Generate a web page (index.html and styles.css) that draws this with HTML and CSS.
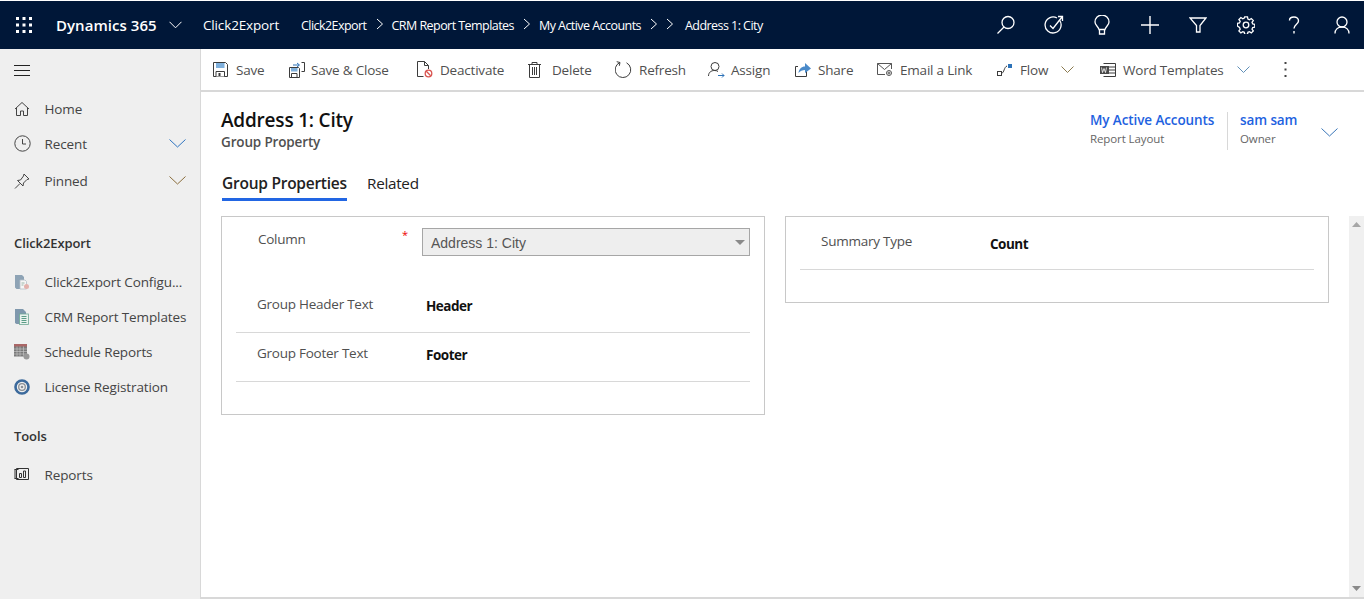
FILE: index.html
```html
<!DOCTYPE html>
<html lang="en">
<head>
<meta charset="utf-8">
<title>Address 1: City</title>
<link rel="stylesheet" href="styles.css">
</head>
<body>
<div class="app">
  <header class="topbar">
    <svg class="waffle" width="16" height="16" viewBox="0 0 16 16"><g fill="#fff"><rect x="0" y="0" width="3" height="3"/><rect x="6.500" y="0" width="3" height="3"/><rect x="13" y="0" width="3" height="3"/><rect x="0" y="6.500" width="3" height="3"/><rect x="6.500" y="6.500" width="3" height="3"/><rect x="13" y="6.500" width="3" height="3"/><rect x="0" y="13" width="3" height="3"/><rect x="6.500" y="13" width="3" height="3"/><rect x="13" y="13" width="3" height="3"/></g></svg>
    <span class="brand">Dynamics 365</span>
    <svg class="brand-chev" width="13" height="8" viewBox="0 0 13 8"><path d="M.5.8 6.500 6.800 12.500.8" fill="none" stroke="#fff"/></svg>
    <span class="app-name">Click2Export</span>
    <nav class="crumbs">
      <span class="crumb">Click2Export</span>
      <svg class="sep" width="8" height="12" viewBox="0 0 8 12"><path d="M1 1l5.500 5L1 11" fill="none" stroke="#fff"/></svg>
      <span class="crumb">CRM Report Templates</span>
      <svg class="sep" width="8" height="12" viewBox="0 0 8 12"><path d="M1 1l5.500 5L1 11" fill="none" stroke="#fff"/></svg>
      <span class="crumb">My Active Accounts</span>
      <svg class="sep" width="8" height="12" viewBox="0 0 8 12"><path d="M1 1l5.500 5L1 11" fill="none" stroke="#fff"/></svg>
      <svg class="sep tight" width="8" height="12" viewBox="0 0 8 12"><path d="M1 1l5.500 5L1 11" fill="none" stroke="#fff"/></svg>
      <span class="crumb">Address 1: City</span>
    </nav>
    <div class="top-icons">
      <span class="top-icon"><svg width="20" height="20" viewBox="0 0 20 20" fill="none" stroke="#fff" stroke-width="1.300"><circle cx="12" cy="7.500" r="6"/><path d="M8 12 1.500 18.500"/></svg></span>
      <span class="top-icon"><svg width="20" height="20" viewBox="0 0 20 20" fill="none" stroke="#fff" stroke-width="1.300"><path d="M15.500 5.200A8 8 0 1 1 13 3"/><path d="M6 10.500l3 3 9-11.500M14 1.500h4.500V6"/></svg></span>
      <span class="top-icon"><svg width="18" height="20" viewBox="0 0 18 20" fill="none" stroke="#fff" stroke-width="1.300"><path d="M6 14.500C5.500 11.500 2 10.500 2 7a7 7 0 0 1 14 0c0 3.500-3.500 4.500-4 7.500z"/><path d="M6.500 14.500V19h5v-4.500"/></svg></span>
      <span class="top-icon"><svg width="18" height="18" viewBox="0 0 18 18" stroke="#fff" stroke-width="1.400"><path d="M0 9h18M9 0v18"/></svg></span>
      <span class="top-icon"><svg width="18" height="18" viewBox="0 0 18 18" fill="none" stroke="#fff" stroke-width="1.300"><path d="M1 2h16l-6 7.500V16H7.500V9.500z"/></svg></span>
      <span class="top-icon"><svg width="18" height="18" viewBox="0 0 18 18" fill="none" stroke="#fff" stroke-width="1.300"><circle cx="9" cy="9" r="2.800"/><path d="M7.600 1h2.800l.4 2.200 1.500.6 1.900-1.200 2 2-1.300 1.800.7 1.600 2.100.4v2.800l-2.100.4-.7 1.600 1.300 1.800-2 2-1.900-1.200-1.500.6-.4 2.200H7.600l-.4-2.200-1.500-.6-1.900 1.200-2-2 1.300-1.800-.7-1.600L.3 10.200V7.400l2.100-.4.7-1.600-1.300-1.800 2-2 1.900 1.200 1.500-.6z" transform="translate(.1 -.1)"/></svg></span>
      <span class="top-icon"><svg width="12" height="18" viewBox="0 0 12 18" fill="none" stroke="#fff" stroke-width="1.400"><path d="M1.500 4.500C1.500 2.300 3.500 1 6 1s4.500 1.500 4.500 4C10.500 8 6 8.500 6 12.500"/><path d="M6 15v2.500"/></svg></span>
      <span class="top-icon"><svg width="16" height="18" viewBox="0 0 16 18" fill="none" stroke="#fff" stroke-width="1.300"><circle cx="8" cy="6" r="5"/><path d="M1 17.500C1 13.500 4 11 8 11s7 2.500 7 6.500"/></svg></span>
    </div>
  </header>

  <aside class="sidebar">
    <button class="hamburger" type="button" aria-label="Menu"><span></span><span></span><span></span></button>
    <ul class="side-list first">
      <li class="side-item"><svg width="16" height="16" viewBox="0 0 16 16" fill="none" stroke="#444"><path d="M1 8 8 1.500 15 8M2.500 7v7.500h4V10h3v4.500h4V7"/></svg><span>Home</span></li>
      <li class="side-item"><svg width="17" height="17" viewBox="0 0 17 17" fill="none" stroke="#444"><circle cx="8.500" cy="8.500" r="7.700"/><path d="M8.500 4v5H12"/></svg><span>Recent</span><svg class="side-chev" width="17" height="9" viewBox="0 0 17 9"><path d="M.5.500l8 7.500 8-7.500" fill="none" stroke="#2f74c0"/></svg></li>
      <li class="side-item pinned"><svg width="16" height="16" viewBox="0 0 16 16" fill="none" stroke="#444"><path d="M10 1l5 5-2 .5-3.500 3.500-.5 3L3.500 7.500l3-.5L9.500 3zM6 10.500l-5 5"/></svg><span>Pinned</span><svg class="side-chev" width="17" height="9" viewBox="0 0 17 9"><path d="M.5.500l8 7.500 8-7.500" fill="none" stroke="#8a6d3b"/></svg></li>
    </ul>
    <h2 class="side-head">Click2Export</h2>
    <ul class="side-list">
      <li class="side-item"><svg width="16" height="16" viewBox="0 0 16 16"><path d="M1 1h7l2 2v3H6v9H2.500L1 13.500z" fill="#8ea3b5"/><path d="M6 6h5l1.500 1.500V15H6z" fill="#f6f6f6" stroke="#b5bfc7" stroke-width=".8"/><path d="M7.500 9h3M7.500 11h2" stroke="#9db5a9"/><circle cx="12.500" cy="12.500" r="2.500" fill="#e3b1ac"/></svg><span>Click2Export Configu...</span></li>
      <li class="side-item"><svg width="16" height="16" viewBox="0 0 16 16"><path d="M1 0h8l3 3v2H6v10H2.500L1 14z" fill="#7f98ad"/><rect x="5.500" y="5" width="9" height="10.500" fill="#e9f2ee" stroke="#6fa894" stroke-width=".8"/><path d="M7.500 7.500h5M7.500 9.500h5M7.500 11.500h5M7.500 13.500h5" stroke="#5b9c86"/></svg><span>CRM Report Templates</span></li>
      <li class="side-item"><svg width="16" height="16" viewBox="0 0 16 16"><rect x="0" y="0" width="13" height="12.500" fill="#7a7a7a"/><rect x="0" y="0" width="13" height="2.500" fill="#a66"/><path d="M0 5h13M0 7.500h13M0 10h13M3 2.500v10M6 2.500v10M9.500 2.500v10" stroke="#ccc" stroke-width=".6"/><circle cx="12.500" cy="12.500" r="3" fill="#999"/></svg><span>Schedule Reports</span></li>
      <li class="side-item"><svg width="16" height="16" viewBox="0 0 16 16" fill="none"><circle cx="8" cy="8" r="6.500" stroke="#3c6a9c" stroke-width="2.600"/><circle cx="8" cy="8" r="3.300" stroke="#8a8f95" stroke-width="1.300"/><circle cx="8" cy="8" r="1.300" fill="#8a8f95"/></svg><span>License Registration</span></li>
    </ul>
    <h2 class="side-head tools">Tools</h2>
    <ul class="side-list">
      <li class="side-item"><svg width="15" height="15" viewBox="0 0 15 15" fill="none" stroke="#333"><path d="M2.500 1.500h12v11h-12zM.5 2.500h4M.5 11.500h4M1 2.500v9"/><path d="M5.500 6.500h2v4h-2zM9.500 4h2v6.500h-2z"/></svg><span>Reports</span></li>
    </ul>
  </aside>

  <main class="main">
    <div class="cmdbar">
      <span class="cmd"><svg width="15" height="15" viewBox="0 0 15 15"><path d="M.5.500h12l2 2v12H.5z" fill="#fff" stroke="#3c3c3c"/><rect x="3" y="1" width="8.500" height="5" fill="#7fb0dc"/><path d="M3 14.500V9.500h8.500v5" fill="#fff" stroke="#3c3c3c"/><rect x="5.500" y="11" width="2" height="3" fill="#3c3c3c"/></svg><span>Save</span></span>
      <span class="cmd narrow"><svg width="16" height="16" viewBox="0 0 16 16"><path d="M.5 5.500h9l1 1v9H.5z" fill="#fff" stroke="#3c3c3c"/><rect x="2" y="6" width="6.500" height="3.500" fill="#7fb0dc"/><path d="M2.500 15v-3.500h5.500V15" fill="none" stroke="#3c3c3c"/><path d="M4 3h6M8 1l2.500 2L8 5" fill="none" stroke="#2c72b8"/><path d="M12.500.5h3v9h-3" fill="none" stroke="#3c3c3c"/></svg><span>Save &amp; Close</span></span>
      <span class="cmd"><svg width="16" height="17" viewBox="0 0 16 17"><path d="M.5 12V.5h7l4 4V8M.5 15.500h6M7.500.5v4h4" fill="none" stroke="#3c3c3c"/><path d="M.5 12v3.500" stroke="#3c3c3c"/><circle cx="11.500" cy="12.500" r="3.300" fill="#fff" stroke="#d9534f" stroke-width="1.300"/><path d="M9.300 10.300l4.400 4.400" stroke="#d9534f" stroke-width="1.300"/></svg><span>Deactivate</span></span>
      <span class="cmd wide"><svg width="13" height="16" viewBox="0 0 13 16" fill="none" stroke="#3c3c3c"><path d="M0 2.500h13M4 2.500V.5h5v2M1.500 2.500v13h10v-13M4.500 5v8M6.500 5v8M8.500 5v8"/></svg><span>Delete</span></span>
      <span class="cmd wide"><svg width="17" height="17" viewBox="0 0 17 17" fill="none" stroke="#3c3c3c"><path d="M11.500 1.800A7.800 7.800 0 1 1 4.800 1.600"/><path d="M1.700.7 5 1.500l-.7 3.300" /></svg><span>Refresh</span></span>
      <span class="cmd"><svg width="17" height="16" viewBox="0 0 17 16" fill="none" stroke="#3c3c3c"><circle cx="7" cy="4.500" r="4"/><path d="M.5 14c0-3.500 2.500-5.500 6-5.500 1.500 0 2.500.3 3.500 1"/><path d="M10 13.500h6M14 11.500l2 2-2 2" stroke="#2c72b8"/></svg><span>Assign</span></span>
      <span class="cmd"><svg width="16" height="15" viewBox="0 0 16 15"><path d="M3 4.500H.5v10h11V9" fill="none" stroke="#3c3c3c"/><path d="M3.500 11C4 7 6.500 4.500 10 4.500V1l6 5.500L10 11V8C7.500 8 5 9 3.500 11z" fill="#4a8ac9"/></svg><span>Share</span></span>
      <span class="cmd"><svg width="16" height="15" viewBox="0 0 16 15" fill="none" stroke="#555"><path d="M8 12.500H.5v-11h14V7"/><path d="M.5 1.500l7 6 7-6"/><circle cx="12" cy="11" r="2.500"/><circle cx="12" cy="11" r="1"/></svg><span>Email a Link</span></span>
      <span class="cmd"><svg width="16" height="14" viewBox="0 0 16 14"><rect x=".5" y="8.500" width="4" height="4" fill="#fff" stroke="#3c3c3c"/><path d="M5 10c2 0 2-6 5-7" fill="none" stroke="#3c3c3c"/><rect x="11" y="1" width="4" height="4" fill="#2c72b8"/></svg><span>Flow</span><svg class="cmd-chev" width="13" height="7" viewBox="0 0 13 7"><path d="M.5.500l6 6 6-6" fill="none" stroke="#8a7a4f"/></svg></span>
      <span class="cmd"><svg width="16" height="14" viewBox="0 0 16 14"><path d="M3.500.5h12v13h-12" fill="#fff" stroke="#3c3c3c"/><path d="M9 4h6M9 7h6M9 10h6" stroke="#3c3c3c"/><rect x="0" y="3" width="9" height="8" fill="#4a4a4a"/><path d="M1.500 4.500l1 5 1.500-4 1.500 4 1-5" fill="none" stroke="#fff" stroke-width=".8"/></svg><span>Word Templates</span><svg class="cmd-chev" width="13" height="7" viewBox="0 0 13 7"><path d="M.5.500l6 6 6-6" fill="none" stroke="#5f8fb8"/></svg></span>
      <span class="cmd"><svg width="3" height="15" viewBox="0 0 3 15" fill="#444"><rect x=".5" width="2" height="2"/><rect x=".5" y="6.500" width="2" height="2"/><rect x=".5" y="13" width="2" height="2"/></svg></span>
    </div>

    <div class="rec-head">
      <div class="rec-title">
        <h1>Address 1: City</h1>
        <p>Group Property</p>
      </div>
      <div class="rec-meta">
        <div class="meta first-meta"><a>My Active Accounts</a><span>Report Layout</span></div>
        <div class="meta owner"><a>sam sam</a><span>Owner</span></div>
        <svg class="meta-chev" width="17" height="9" viewBox="0 0 17 9"><path d="M.5.500l8 7.500 8-7.500" fill="none" stroke="#3a76b8"/></svg>
      </div>
    </div>

    <div class="tabs">
      <span class="tab active">Group Properties</span>
      <span class="tab">Related</span>
    </div>

    <div class="content">
      <div class="panels">
        <section class="panel left">
          <div class="row column-row">
            <span class="lbl">Column</span>
            <span class="req">*</span>
            <div class="select">Address 1: City<svg width="10" height="5" viewBox="0 0 10 5"><path d="M0 0h10L5 5z" fill="#8a8a8a"/></svg></div>
          </div>
          <div class="row text-row"><span class="lbl">Group Header Text</span><b>Header</b></div>
          <div class="row text-row"><span class="lbl">Group Footer Text</span><b>Footer</b></div>
        </section>
        <section class="panel right">
          <div class="row summary-row"><span class="lbl">Summary Type</span><b>Count</b></div>
        </section>
      </div>
      <div class="scrollbar">
        <svg width="9" height="5" viewBox="0 0 9 5"><path d="M0 5h9L4.500 0z" fill="#a6a6a6"/></svg>
        <svg width="9" height="5" viewBox="0 0 9 5"><path d="M0 0h9L4.500 5z" fill="#8a8a8a"/></svg>
      </div>
    </div>
  </main>
</div>
</body>
</html>
```

FILE: styles.css
```css
* { box-sizing: border-box; }
html, body { margin: 0; height: 100%; }
body {
  font-family: "Open Sans", "Noto Sans", "Liberation Sans", sans-serif;
  color: #333;
  background: #fff;
  overflow: hidden;
}
ul { list-style: none; margin: 0; padding: 0; }
h1, h2, p { margin: 0; }

.app {
  height: 599px;
  display: grid;
  grid-template-columns: 201px 1fr;
  grid-template-rows: 48px 1fr;
  padding-top: 1px;
}

/* top bar */
.topbar {
  grid-column: 1 / 3;
  background: #001738;
  color: #fff;
  display: flex;
  align-items: center;
  padding-left: 16px;
  min-width: 0;
}
.waffle { margin-right: 24px; }
.brand { font-size: 15px; font-weight: 600; width: 113px; white-space: nowrap; letter-spacing: .05px; }
.brand-chev { margin-right: 21px; }
.app-name { font-size: 13.500px; width: 98px; letter-spacing: -.15px; white-space: nowrap; }
.crumbs { display: flex; align-items: center; font-size: 12.500px; letter-spacing: -.55px; white-space: nowrap; }
.sep { margin: 0 8px 2px 9px; }
.sep.tight { margin-left: 0; margin-right: 11px; }
.top-icons { margin-left: auto; margin-right: -2px; display: flex; }
.top-icon { width: 48px; height: 48px; display: flex; align-items: center; justify-content: center; }

/* sidebar */
.sidebar {
  background: #efefef;
  border-right: 1px solid #d8d8d8;
  display: flex;
  flex-direction: column;
}
.hamburger {
  border: 0;
  background: none;
  padding: 16px 0 0 14px;
  height: 42px;
  display: flex;
  flex-direction: column;
  gap: 4px;
}
.hamburger span { display: block; width: 16px; height: 1px; background: #222; }
.side-item {
  height: 35px;
  display: grid;
  grid-template-columns: 30.500px 1fr auto;
  align-items: center;
  padding-left: 14px;
  font-size: 13.500px;
  letter-spacing: -.12px;
  color: #444;
  white-space: nowrap;
}
.side-item.pinned { height: 39px; }
.side-chev { margin-right: 14px; }
.side-head {
  font-size: 13px;
  font-weight: 600;
  color: #333;
  letter-spacing: -.1px;
  padding-left: 14px;
  margin-top: 34px;
  margin-bottom: 12px;
  height: 18px;
  line-height: 18px;
}
.side-head.tools { margin-top: 23px; margin-bottom: 12px; }

/* main */
.main { display: flex; flex-direction: column; min-width: 0; border-bottom: 2px solid #d8d8d8; }
.cmdbar {
  height: 43px;
  flex: none;
  border-bottom: 2px solid #d8d8d8;
  display: grid;
  grid-template-columns: 76px 128px 111px 87px 93px 87px 82px 120px 103px 184px 20px;
  padding-left: 12px;
  align-items: center;
}
.cmd {
  display: grid;
  grid-template-columns: 23px auto auto;
  justify-content: start;
  align-items: center;
  font-size: 13.500px;
  letter-spacing: -.2px;
  color: #505050;
  white-space: nowrap;
  height: 100%;
}
.cmd.narrow { grid-template-columns: 22px auto; }
.cmd.wide { grid-template-columns: 24px auto; }
.cmd-chev { margin-left: 13px; }
.rec-head {
  display: flex;
  justify-content: space-between;
  padding: 16px 26px 0 20px;
  height: 78px;
  flex: none;
}
.rec-title h1 { font-size: 19px; font-weight: 600; color: #111; line-height: 24px; letter-spacing: -.2px; }
.rec-title p { font-size: 13.500px; font-weight: 600; color: #505050; line-height: 20px; letter-spacing: -.15px; }
.rec-meta { display: flex; align-items: flex-start; }
.meta { display: flex; flex-direction: column; height: 38px; margin-top: 4px; }
.meta a { font-size: 13.500px; font-weight: 600; color: #1e62e0; line-height: 16px; white-space: nowrap; letter-spacing: -.1px; }
.meta span { font-size: 11.500px; color: #666; line-height: 22px; letter-spacing: -.1px; }
.first-meta { width: 138px; border-right: 1px solid #d8d8d8; }
.owner { padding-left: 12px; width: 93px; }
.meta-chev { margin-top: 20px; }
.tabs { display: flex; gap: 20px; padding-left: 21px; height: 33px; flex: none; }
.tab { font-size: 15.300px; color: #222; height: 31px; line-height: 26px; letter-spacing: -.3px; }
.tab.active { font-size: 15.500px; font-weight: 600; color: #222; border-bottom: 3px solid #2266e3; width: 125px; white-space: nowrap; letter-spacing: -.25px; }

.content { flex: 1; display: flex; margin-top: 13px; min-height: 0; padding-left: 20px; }
.panels { flex: 1; display: flex; align-items: flex-start; gap: 20px; }
.panel { border: 1px solid #c8c8c8; width: 544px; font-size: 13.500px; }
.panel.left { height: 199px; padding: 11px 14px 0 14px; }
.panel.right { height: 87px; padding: 0 14px; }
.row { display: grid; align-items: center; }
.lbl { color: #505050; letter-spacing: -.25px; }
.column-row { grid-template-columns: 166px 20px 1fr; height: 56px; align-items: start; }
.column-row .lbl { padding-left: 22px; margin-top: 1px; line-height: 20px; }
.req { color: #e00; font-size: 11px; line-height: 14px; }
.select {
  height: 28px;
  background: #eee;
  border: 1px solid #a6a6a6;
  display: flex;
  align-items: center;
  justify-content: space-between;
  padding: 1px 4px 0 8px;
  font-family: "Liberation Sans", Arial, sans-serif;
  font-size: 14px;
  color: #555;
}
.text-row { grid-template-columns: 190px 1fr; height: 49px; border-bottom: 1px solid #d8d8d8; padding-bottom: 4px; }
.text-row .lbl { padding-left: 21px; padding-bottom: 4px; }
.row b { color: #111; font-weight: 700; font-size: 13.500px; letter-spacing: -.5px; }
.summary-row { grid-template-columns: 190px 1fr; height: 53px; border-bottom: 1px solid #d8d8d8; padding-top: 1px; }
.summary-row .lbl { padding-left: 21px; padding-bottom: 5px; }

.scrollbar {
  width: 15px;
  margin-left: 20px;
  background: #f0f0f0;
  display: flex;
  flex-direction: column;
  justify-content: space-between;
  align-items: center;
  padding: 6px 0;
}
```
